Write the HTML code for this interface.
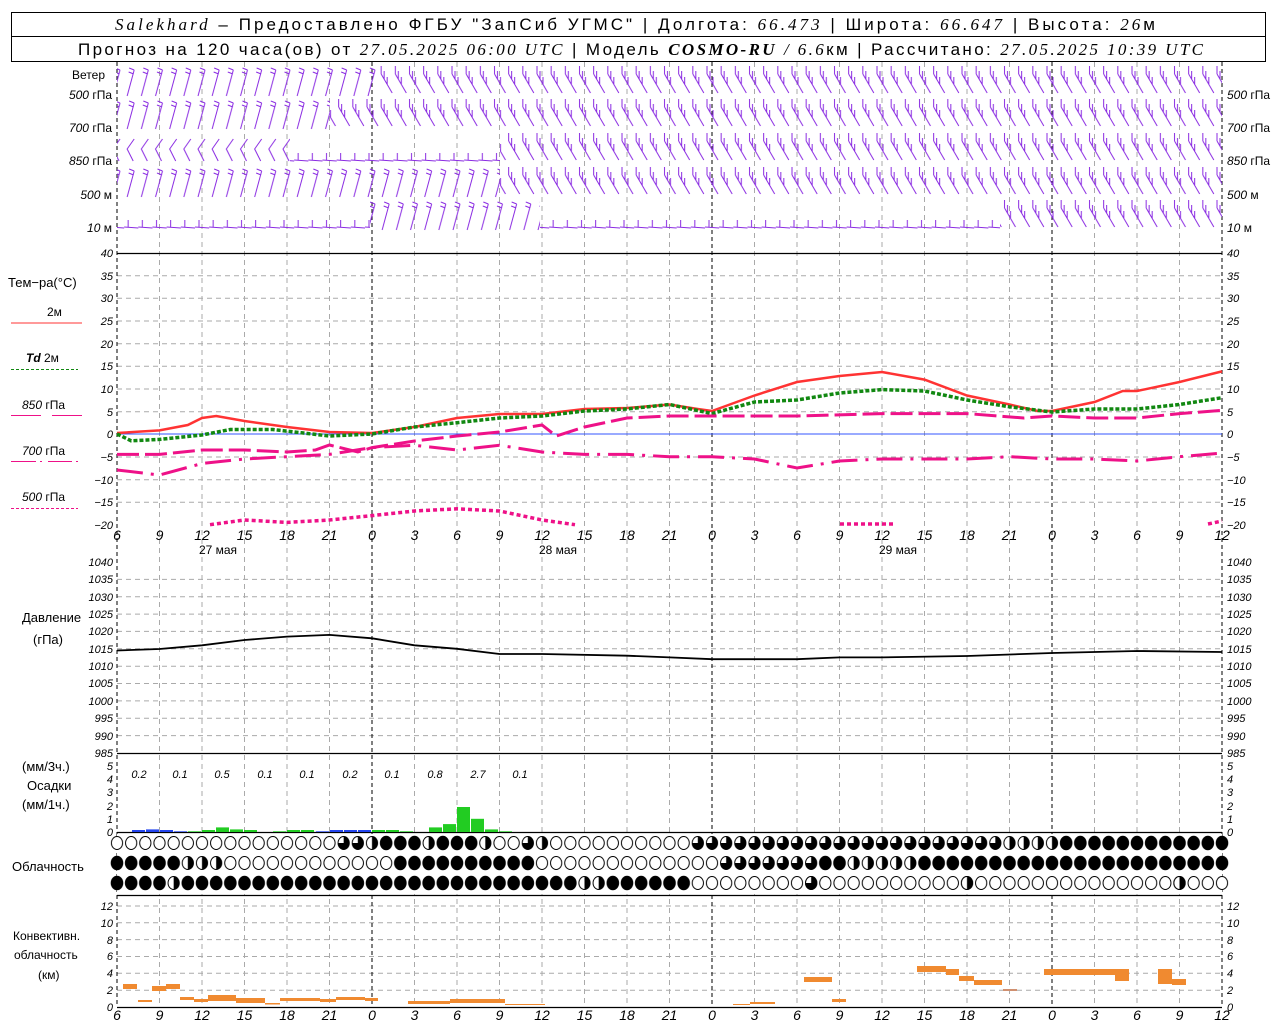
<!DOCTYPE html>
<html><head><meta charset="utf-8"><style>
html,body{margin:0;padding:0;background:#fff;}
svg{display:block;}
.t{font-family:"Liberation Sans","DejaVu Sans",sans-serif;font-size:12px;fill:#000;}
.ti{font-family:"Liberation Sans","DejaVu Sans",sans-serif;font-size:11px;font-style:italic;fill:#000;}
.tx{font-family:"Liberation Sans","DejaVu Sans",sans-serif;font-size:14px;font-style:italic;fill:#000;}
.h{font-family:"Liberation Sans","DejaVu Sans",sans-serif;font-size:17px;fill:#000;}
.hi{font-family:"Liberation Serif","DejaVu Serif",serif;font-style:italic;}
</style></head><body>
<svg width="1280" height="1024" viewBox="0 0 1280 1024" xmlns="http://www.w3.org/2000/svg">
<defs>
<pattern id="b1" patternUnits="userSpaceOnUse" x="110" y="0" width="14.1667" height="40"><path d="M3 30L10 4M10 4L5 2M9.5 8L4.5 6" stroke="#8a2be2" fill="none" stroke-width="1"/></pattern>
<pattern id="b2" patternUnits="userSpaceOnUse" x="110" y="0" width="14.1667" height="40"><path d="M2 8L13 27M2 8L2 0M5 13L5 5M8 18L8 11" stroke="#8a2be2" fill="none" stroke-width="1"/></pattern>
<pattern id="b3" patternUnits="userSpaceOnUse" x="110" y="0" width="14.1667" height="40"><path d="M0 27L14.2 28M4 27L4 20" stroke="#8a2be2" fill="none" stroke-width="1"/></pattern>
<pattern id="b4" patternUnits="userSpaceOnUse" x="110" y="0" width="14.1667" height="40"><path d="M10 6L3 16L9 28" stroke="#8a2be2" fill="none" stroke-width="1"/></pattern>
<pattern id="ce" patternUnits="userSpaceOnUse" x="109.92" y="0" width="14.1667" height="20"><ellipse cx="7.08" cy="10" rx="5.6" ry="6.5" fill="#fff" stroke="#000"/></pattern>
<pattern id="cf" patternUnits="userSpaceOnUse" x="109.92" y="0" width="14.1667" height="20"><ellipse cx="7.08" cy="10" rx="5.8" ry="6.7" fill="#000" stroke="#000"/></pattern>
<pattern id="ch" patternUnits="userSpaceOnUse" x="109.92" y="0" width="14.1667" height="20"><ellipse cx="7.08" cy="10" rx="5.6" ry="6.5" fill="#fff" stroke="#000"/><path d="M7.08 3.5A5.6 6.5 0 0 1 7.08 16.5Z" fill="#000"/></pattern>
<pattern id="cq" patternUnits="userSpaceOnUse" x="109.92" y="0" width="14.1667" height="20"><ellipse cx="7.08" cy="10" rx="5.6" ry="6.5" fill="#fff" stroke="#000"/><path d="M7.08 10L7.08 3.5A5.6 6.5 0 1 1 1.48 10Z" fill="#000"/></pattern>
</defs>

<!-- header -->
<rect x="11.5" y="12.5" width="1254" height="49" fill="none" stroke="#000"/>
<line x1="11" y1="36.5" x2="1265" y2="36.5" stroke="#000"/>
<text class="h" x="115" y="30" textLength="1040" lengthAdjust="spacing"><tspan class="hi">Salekhard</tspan> – Предоставлено ФГБУ "ЗапСиб УГМС" | Долгота: <tspan class="hi">66.473</tspan> | Широта: <tspan class="hi">66.647</tspan> | Высота: <tspan class="hi">26</tspan>м</text>
<text class="h" x="78" y="55" textLength="1125" lengthAdjust="spacing">Прогноз на 120 часа(ов) от <tspan class="hi">27.05.2025 06:00 UTC</tspan> | Модель <tspan class="hi" font-weight="bold" font-style="normal">COSMO-RU</tspan> <tspan class="hi">/ 6.6</tspan>км | Рассчитано: <tspan class="hi">27.05.2025 10:39 UTC</tspan></text>

<!-- horizontal grids -->
<path d="M117 275.7H1222M117 298.3H1222M117 321H1222M117 343.7H1222M117 366.3H1222M117 389H1222M117 411.7H1222M117 457H1222M117 479.7H1222M117 502.3H1222
M117 579.4H1222M117 596.7H1222M117 614.1H1222M117 631.4H1222M117 648.8H1222M117 666.2H1222M117 683.5H1222M117 700.9H1222M117 718.2H1222M117 735.6H1222
M117 906H1222M117 922.8H1222M117 939.6H1222M117 956.5H1222M117 973.3H1222M117 990.2H1222" stroke="#aaa" stroke-dasharray="5 4" fill="none"/>
<!-- vertical grids -->
<path d="M159.5 62V1007M202 62V1007M244.5 62V1007M287 62V1007M329.5 62V1007M414.5 62V1007M457 62V1007M499.5 62V1007M542 62V1007M584.5 62V1007M627 62V1007M669.5 62V1007M754.5 62V1007M797 62V1007M839.5 62V1007M882 62V1007M924.5 62V1007M967 62V1007M1009.5 62V1007M1094.5 62V1007M1137 62V1007M1179.5 62V1007" stroke="#aaa" stroke-dasharray="5 4" fill="none"/>
<path d="M117 62V1007M372 62V1007M712 62V1007M1052 62V1007M1222 62V1007" stroke="#000" stroke-dasharray="4 3" fill="none"/>
<!-- panel lines -->
<path d="M117 253.5H1222M117 753.5H1222M117 832.5H1222M117 895.5H1222M117 1007.5H1222" stroke="#000" stroke-width="1.3"/>
<line x1="117" y1="434" x2="1222" y2="434" stroke="#3355ff" stroke-width="1"/>

<!-- wind barbs -->
<g transform="translate(0,66)"><rect x="117" y="0" width="263" height="40" fill="url(#b1)"/><rect x="380" y="0" width="842" height="40" fill="url(#b2)"/></g>
<g transform="translate(0,99)"><rect x="117" y="0" width="213" height="40" fill="url(#b1)"/><rect x="330" y="0" width="892" height="40" fill="url(#b2)"/></g>
<g transform="translate(0,133)"><rect x="117" y="0" width="173" height="40" fill="url(#b4)"/><rect x="290" y="0" width="210" height="40" fill="url(#b3)"/><rect x="500" y="0" width="722" height="40" fill="url(#b2)"/></g>
<g transform="translate(0,167)"><rect x="117" y="0" width="383" height="40" fill="url(#b1)"/><rect x="500" y="0" width="722" height="40" fill="url(#b2)"/></g>
<g transform="translate(0,200)"><rect x="117" y="0" width="253" height="40" fill="url(#b3)"/><rect x="370" y="0" width="170" height="40" fill="url(#b1)"/><rect x="540" y="0" width="460" height="40" fill="url(#b3)"/><rect x="1000" y="0" width="222" height="40" fill="url(#b2)"/></g>

<!-- temperature curves -->
<polyline fill="none" stroke="#ff3333" stroke-width="2.5" points="117,433 159.5,430.4 187.8,425 202,418 216.2,416 244.5,421 287,427 329.5,432 372,433 414.5,427 457,418 499.5,414 542,414 584.5,409 627,408 669.5,404.5 697.8,409 712,411 754.5,395.5 797,382 839.5,376 882,372 924.5,379.6 967,395.5 1009.5,404.5 1037.8,411 1052,411 1094.5,402 1122.8,391 1137,391 1179.5,382 1222,371.4"/>
<polyline fill="none" stroke="#118811" stroke-width="3.5" stroke-dasharray="4 2" points="117,434 131.2,440.8 159.5,439.4 202,435 230.3,429.5 272.8,429.5 329.5,436 372,434 414.5,427 457,422.7 499.5,418 542,416 584.5,411 627,409 669.5,404.5 712,413.6 754.5,402 797,400 839.5,393 882,389.6 924.5,391 967,400 1009.5,406.8 1052,412 1094.5,409 1137,409 1179.5,404.5 1222,397.7"/>
<polyline fill="none" stroke="#ee1188" stroke-width="3" stroke-dasharray="22 6" points="117,454.4 159.5,454.4 202,450 244.5,450 287,452 315.3,450 329.5,445 357.8,452 372,447.6 414.5,441 457,436 499.5,432 542,425 556.2,436 584.5,427 627,418 669.5,416 712,416 797,416 882,413.6 967,413.6 1023.7,418 1052,416 1094.5,418 1137,418 1179.5,413.6 1222,410.4"/>
<polyline fill="none" stroke="#ee1188" stroke-width="3" stroke-dasharray="26 8 3 8" points="117,470 159.5,475 202,463.5 244.5,459 287,456.7 329.5,454.4 372,447.6 414.5,445.3 457,450 499.5,445.3 542,452 584.5,454.4 627,454.4 669.5,456.7 712,456.7 754.5,459 797,468 839.5,461 882,459 967,459 1009.5,456.7 1052,459 1094.5,459 1137,461 1179.5,456.7 1222,453"/>
<polyline fill="none" stroke="#ee1188" stroke-width="3.5" stroke-dasharray="4 3" points="210,524.7 244.5,520 287,522.4 329.5,520 372,515.6 414.5,511 457,508.8 499.5,511 542,520 575,524.7"/>
<polyline fill="none" stroke="#ee1188" stroke-width="3.5" stroke-dasharray="4 3" points="840,524 895,524"/>
<polyline fill="none" stroke="#ee1188" stroke-width="3.5" stroke-dasharray="4 3" points="1208,524 1222,521"/>

<!-- pressure -->
<polyline fill="none" stroke="#000" stroke-width="1.8" points="117,650.5 159.5,649 202,645.3 244.5,640 287,636.6 329.5,634.9 372,638.3 414.5,645.3 457,648.8 499.5,654 542,654 627,655.7 669.5,657.4 712,659.2 797,659.2 839.5,657.4 882,657.4 967,656 1052,653 1137,651 1222,652"/>

<!-- precip bars -->
<g fill="#2244ee">
<rect x="132" y="830" width="13" height="2"/><rect x="146" y="829.4" width="13" height="2.6"/><rect x="160" y="830" width="13" height="2"/><rect x="174" y="831.3" width="13" height="0.7"/>
<rect x="316" y="831.3" width="13" height="0.7"/><rect x="330" y="830" width="13" height="2"/><rect x="344" y="830" width="13" height="2"/><rect x="358" y="830" width="13" height="2"/>
</g>
<g fill="#22cc22">
<rect x="188" y="831.3" width="13" height="0.7"/><rect x="202" y="830" width="13" height="2"/><rect x="216" y="827.4" width="13" height="4.6"/><rect x="230" y="829.4" width="13" height="2.6"/><rect x="244" y="830" width="13" height="2"/>
<rect x="273" y="831.3" width="13" height="0.7"/><rect x="287" y="830" width="13" height="2"/><rect x="301" y="830" width="13" height="2"/>
<rect x="372" y="830" width="13" height="2"/><rect x="386" y="830" width="13" height="2"/><rect x="400" y="831.3" width="13" height="0.7"/>
<rect x="429" y="827.4" width="13" height="4.6"/><rect x="443" y="824.1" width="13" height="7.9"/><rect x="457" y="807" width="13" height="25"/><rect x="471" y="818.8" width="13" height="13.2"/><rect x="485" y="829.4" width="13" height="2.6"/><rect x="499" y="831.3" width="13" height="0.7"/>
</g>
<g class="ti" text-anchor="middle" font-size="13">
<text x="139" y="778">0.2</text><text x="180" y="778">0.1</text><text x="222" y="778">0.5</text><text x="265" y="778">0.1</text><text x="307" y="778">0.1</text><text x="350" y="778">0.2</text><text x="392" y="778">0.1</text><text x="435" y="778">0.8</text><text x="478" y="778">2.7</text><text x="520" y="778">0.1</text>
</g>

<!-- cloud circles -->
<rect x="117" y="834" width="1105" height="60" fill="#fff"/>
<g transform="translate(0,833)">
<rect x="109.9" y="0" width="226.7" height="20" fill="url(#ce)"/><rect x="336.6" y="0" width="28.4" height="20" fill="url(#cq)"/><rect x="365" y="0" width="14.1" height="20" fill="url(#ch)"/><rect x="379.1" y="0" width="42.6" height="20" fill="url(#cf)"/><rect x="421.7" y="0" width="14.1" height="20" fill="url(#ch)"/><rect x="435.8" y="0" width="42.5" height="20" fill="url(#cf)"/><rect x="478.3" y="0" width="14.2" height="20" fill="url(#ch)"/><rect x="492.5" y="0" width="28.3" height="20" fill="url(#ce)"/><rect x="520.8" y="0" width="14.2" height="20" fill="url(#cq)"/><rect x="535" y="0" width="14.2" height="20" fill="url(#ch)"/><rect x="549.2" y="0" width="141.6" height="20" fill="url(#ce)"/><rect x="690.8" y="0" width="311.7" height="20" fill="url(#cq)"/><rect x="1002.5" y="0" width="56.7" height="20" fill="url(#ch)"/><rect x="1059.2" y="0" width="170" height="20" fill="url(#cf)"/>
</g>
<g transform="translate(0,853)">
<rect x="109.9" y="0" width="70.9" height="20" fill="url(#cf)"/><rect x="180.8" y="0" width="42.5" height="20" fill="url(#ch)"/><rect x="223.3" y="0" width="170" height="20" fill="url(#ce)"/><rect x="393.3" y="0" width="141.7" height="20" fill="url(#cf)"/><rect x="535" y="0" width="184.2" height="20" fill="url(#ce)"/><rect x="719.2" y="0" width="99.1" height="20" fill="url(#cq)"/><rect x="818.3" y="0" width="28.4" height="20" fill="url(#cf)"/><rect x="846.7" y="0" width="70.8" height="20" fill="url(#ch)"/><rect x="917.5" y="0" width="311.7" height="20" fill="url(#cf)"/>
</g>
<g transform="translate(0,873)">
<rect x="109.9" y="0" width="56.7" height="20" fill="url(#cf)"/><rect x="166.6" y="0" width="14.2" height="20" fill="url(#ch)"/><rect x="180.8" y="0" width="396.7" height="20" fill="url(#cf)"/><rect x="577.5" y="0" width="28.3" height="20" fill="url(#ch)"/><rect x="605.8" y="0" width="85" height="20" fill="url(#cf)"/><rect x="690.8" y="0" width="538.4" height="20" fill="url(#ce)"/><rect x="804" y="0" width="14.2" height="20" fill="url(#cq)"/><rect x="960.5" y="0" width="14.2" height="20" fill="url(#ch)"/><rect x="1173" y="0" width="14.2" height="20" fill="url(#ch)"/>
</g>

<!-- convective bars -->
<g fill="#f08a30">
<rect x="123" y="984" width="14" height="5"/><rect x="138" y="1000" width="14" height="2"/><rect x="152" y="986" width="14" height="5"/><rect x="166" y="984" width="14" height="5"/><rect x="180" y="997" width="14" height="3"/><rect x="194" y="999" width="14" height="3"/><rect x="208" y="995" width="28" height="6"/><rect x="236" y="998" width="29" height="5"/><rect x="265" y="1003" width="15" height="1.5"/><rect x="280" y="998" width="40" height="3"/><rect x="320" y="999" width="16" height="3"/><rect x="336" y="997" width="29" height="3"/><rect x="365" y="998" width="13" height="3"/>
<rect x="408" y="1001" width="42" height="3"/><rect x="450" y="999" width="55" height="4"/><rect x="505" y="1004" width="40" height="1"/><rect x="733" y="1004" width="17" height="1"/><rect x="750" y="1002" width="25" height="2"/>
<rect x="804" y="977" width="28" height="5"/><rect x="832" y="999" width="14" height="3"/><rect x="917" y="966" width="29" height="6"/><rect x="946" y="969" width="13" height="6"/><rect x="959" y="976" width="15" height="5"/><rect x="974" y="980" width="28" height="5"/><rect x="1003" y="989" width="14" height="2" fill="#d09070"/>
<rect x="1044" y="969" width="71" height="6"/><rect x="1115" y="969" width="14" height="12"/><rect x="1158" y="969" width="14" height="15"/><rect x="1172" y="979" width="14" height="6"/>
</g>

<!-- y tick labels -->
<g class="ti" text-anchor="end">
<text x="113" y="257">40</text><text x="113" y="280">35</text><text x="113" y="302">30</text><text x="113" y="325">25</text><text x="113" y="348">20</text><text x="113" y="370">15</text><text x="113" y="393">10</text><text x="113" y="416">5</text><text x="113" y="438">0</text><text x="113" y="461">−5</text><text x="113" y="484">−10</text><text x="113" y="506">−15</text><text x="113" y="529">−20</text>
<text x="113" y="566">1040</text><text x="113" y="583">1035</text><text x="113" y="601">1030</text><text x="113" y="618">1025</text><text x="113" y="635">1020</text><text x="113" y="653">1015</text><text x="113" y="670">1010</text><text x="113" y="687">1005</text><text x="113" y="705">1000</text><text x="113" y="722">995</text><text x="113" y="740">990</text><text x="113" y="757">985</text>
<text x="113" y="770">5</text><text x="113" y="783">4</text><text x="113" y="796">3</text><text x="113" y="810">2</text><text x="113" y="823">1</text><text x="113" y="836">0</text>
<text x="113" y="910">12</text><text x="113" y="927">10</text><text x="113" y="944">8</text><text x="113" y="960">6</text><text x="113" y="977">4</text><text x="113" y="994">2</text><text x="113" y="1011">0</text>
</g>
<g class="ti" text-anchor="start">
<text x="1227" y="257">40</text><text x="1227" y="280">35</text><text x="1227" y="302">30</text><text x="1227" y="325">25</text><text x="1227" y="348">20</text><text x="1227" y="370">15</text><text x="1227" y="393">10</text><text x="1227" y="416">5</text><text x="1227" y="438">0</text><text x="1227" y="461">−5</text><text x="1227" y="484">−10</text><text x="1227" y="506">−15</text><text x="1227" y="529">−20</text>
<text x="1227" y="566">1040</text><text x="1227" y="583">1035</text><text x="1227" y="601">1030</text><text x="1227" y="618">1025</text><text x="1227" y="635">1020</text><text x="1227" y="653">1015</text><text x="1227" y="670">1010</text><text x="1227" y="687">1005</text><text x="1227" y="705">1000</text><text x="1227" y="722">995</text><text x="1227" y="740">990</text><text x="1227" y="757">985</text>
<text x="1227" y="770">5</text><text x="1227" y="783">4</text><text x="1227" y="796">3</text><text x="1227" y="810">2</text><text x="1227" y="823">1</text><text x="1227" y="836">0</text>
<text x="1227" y="910">12</text><text x="1227" y="927">10</text><text x="1227" y="944">8</text><text x="1227" y="960">6</text><text x="1227" y="977">4</text><text x="1227" y="994">2</text><text x="1227" y="1011">0</text>
</g>

<!-- wind labels -->
<g class="t" font-size="11">
<text x="72" y="79" font-size="12">Ветер</text>
<text x="112" y="99" text-anchor="end"><tspan font-style="italic">500</tspan> гПа</text>
<text x="112" y="132" text-anchor="end"><tspan font-style="italic">700</tspan> гПа</text>
<text x="112" y="165" text-anchor="end"><tspan font-style="italic">850</tspan> гПа</text>
<text x="112" y="199" text-anchor="end"><tspan font-style="italic">500</tspan>  м</text>
<text x="112" y="232" text-anchor="end"><tspan font-style="italic">10</tspan>   м</text>
<text x="1227" y="99"><tspan font-style="italic">500</tspan> гПа</text>
<text x="1227" y="132"><tspan font-style="italic">700</tspan> гПа</text>
<text x="1227" y="165"><tspan font-style="italic">850</tspan> гПа</text>
<text x="1227" y="199"><tspan font-style="italic">500</tspan>  м</text>
<text x="1227" y="232"><tspan font-style="italic">10</tspan>   м</text>
</g>

<!-- x labels -->
<g class="tx" text-anchor="middle">
<text x="117" y="540">6</text><text x="159.5" y="540">9</text><text x="202" y="540">12</text><text x="244.5" y="540">15</text><text x="287" y="540">18</text><text x="329.5" y="540">21</text><text x="372" y="540">0</text><text x="414.5" y="540">3</text><text x="457" y="540">6</text><text x="499.5" y="540">9</text><text x="542" y="540">12</text><text x="584.5" y="540">15</text><text x="627" y="540">18</text><text x="669.5" y="540">21</text><text x="712" y="540">0</text><text x="754.5" y="540">3</text><text x="797" y="540">6</text><text x="839.5" y="540">9</text><text x="882" y="540">12</text><text x="924.5" y="540">15</text><text x="967" y="540">18</text><text x="1009.5" y="540">21</text><text x="1052" y="540">0</text><text x="1094.5" y="540">3</text><text x="1137" y="540">6</text><text x="1179.5" y="540">9</text><text x="1222" y="540">12</text>
<text x="117" y="1020">6</text><text x="159.5" y="1020">9</text><text x="202" y="1020">12</text><text x="244.5" y="1020">15</text><text x="287" y="1020">18</text><text x="329.5" y="1020">21</text><text x="372" y="1020">0</text><text x="414.5" y="1020">3</text><text x="457" y="1020">6</text><text x="499.5" y="1020">9</text><text x="542" y="1020">12</text><text x="584.5" y="1020">15</text><text x="627" y="1020">18</text><text x="669.5" y="1020">21</text><text x="712" y="1020">0</text><text x="754.5" y="1020">3</text><text x="797" y="1020">6</text><text x="839.5" y="1020">9</text><text x="882" y="1020">12</text><text x="924.5" y="1020">15</text><text x="967" y="1020">18</text><text x="1009.5" y="1020">21</text><text x="1052" y="1020">0</text><text x="1094.5" y="1020">3</text><text x="1137" y="1020">6</text><text x="1179.5" y="1020">9</text><text x="1222" y="1020">12</text>
</g>
<g class="t" font-size="13" text-anchor="middle">
<text x="218" y="554">27 мая</text><text x="558" y="554">28 мая</text><text x="898" y="554">29 мая</text>
</g>

<!-- left legend -->
<g class="t">
<text x="8" y="287" font-size="13">Тем−ра(°C)</text>
<text x="47" y="316">2м</text>
<line x1="11" y1="323" x2="82" y2="323" stroke="#ff3333" stroke-width="1"/>
<text x="26" y="362"><tspan font-style="italic" font-weight="bold">Td</tspan>   2м</text>
<line x1="11" y1="369.5" x2="78" y2="369.5" stroke="#118811" stroke-dasharray="3 2"/>
<text x="22" y="409"><tspan font-style="italic">850</tspan> гПа</text>
<path d="M11 415.5H41M52 415.5H82" stroke="#ee1188"/>
<text x="22" y="455"><tspan font-style="italic">700</tspan> гПа</text>
<path d="M11 461.5H36M40 461.5H42M48 461.5H72M76 461.5H78" stroke="#ee1188"/>
<text x="22" y="501"><tspan font-style="italic">500</tspan> гПа</text>
<line x1="11" y1="508.5" x2="78" y2="508.5" stroke="#ee1188" stroke-dasharray="3 2"/>
<text x="22" y="622" font-size="13">Давление</text>
<text x="33" y="644" font-size="13">(гПа)</text>
<text x="22" y="771" font-size="13">(мм/3ч.)</text>
<text x="27" y="790" font-size="13">Осадки</text>
<text x="22" y="809" font-size="13">(мм/1ч.)</text>
<text x="12" y="871" font-size="13">Облачность</text>
<text x="13" y="940" font-size="12">Конвективн.</text>
<text x="14" y="959" font-size="12">облачность</text>
<text x="38" y="979" font-size="12">(км)</text>
</g>
</svg>
</body></html>
